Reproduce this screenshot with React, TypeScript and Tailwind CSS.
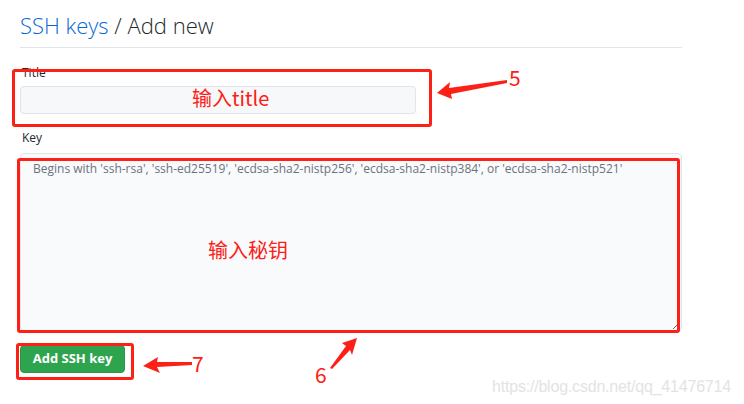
const RED = "#fc2016";

export default function App() {
  return (
    <div className="relative h-[404px] w-[744px] overflow-hidden bg-white font-['Open_Sans','Noto_Sans',sans-serif] text-[#24292e]">
      <div className="flex w-[682px] flex-col pl-5">
        <div className="border-b border-[#e1e4e8] pb-[7px] pt-[10px]">
          <h1 className="text-[22px] font-light leading-[30px]">
            <span className="text-[#0366d6]">SSH keys</span> / Add new
          </h1>
        </div>

        <form className="flex flex-col items-start pt-[17px]">
          <div className="flex flex-col gap-[5px]">
            <label className="pl-[2px] text-[12px] font-medium leading-4">Title</label>
            <input
              type="text"
              className="h-[28px] w-[396px] rounded-[4px] border border-[#e1e4e8] bg-[#f6f8fa] px-2 text-[12px] outline-none"
            />
          </div>

          <div className="mt-4 flex flex-col gap-[7px]">
            <label className="pl-[2px] text-[12px] font-medium leading-4">Key</label>
            <textarea
              className="h-[178px] w-[662px] rounded-[4px] border border-[#e1e4e8] bg-[#f9fafb] px-3 pt-[7px] text-[12px] leading-4 outline-none placeholder:text-[#6a737d]"
              placeholder="Begins with 'ssh-rsa', 'ssh-ed25519', 'ecdsa-sha2-nistp256', 'ecdsa-sha2-nistp384', or 'ecdsa-sha2-nistp521'"
            />
          </div>

          <button
            type="button"
            className="mt-[14px] h-[28px] w-[105px] rounded-[4px] border border-[#28964a] bg-[#2ea44f] text-[13px] font-bold text-white"
          >
            Add SSH key
          </button>
        </form>
      </div>

      {/* red annotations drawn over the screenshot */}
      <div className="pointer-events-none absolute left-[12px] top-[69px] h-[58px] w-[420px] rounded-[3px] border-[3px] border-[#fc2016]" />
      <div className="pointer-events-none absolute left-[17px] top-[158px] h-[175px] w-[663px] rounded-[3px] border-[3px] border-[#fc2016]" />
      <div className="pointer-events-none absolute left-[16px] top-[343px] h-[37px] w-[118px] rounded-[3px] border-[3px] border-[#fc2016]" />

      <div className="absolute left-[192px] top-[86px] font-['Noto_Sans_CJK_SC',sans-serif] text-[20px] leading-[24px] text-[#fc2016]">
        输入title
      </div>
      <div className="absolute left-[208px] top-[238px] font-['Noto_Sans_CJK_SC',sans-serif] text-[20px] leading-[24px] text-[#fc2016]">
        输入秘钥
      </div>

      <svg className="pointer-events-none absolute left-0 top-0" width="744" height="404" viewBox="0 0 744 404">
        <g fill={RED}>
          <polygon points="437,93 450,82 449,88 507,80 507,83 451,94 452,99" />
          <polygon points="143,366 158,357 157,362 192,362 192,365 157,367 160,373" />
          <polygon points="357,338 342,343 346,346 330,368 332,369 350,350 352,355" />
        </g>
        <g fill={RED} fontFamily="'Noto Sans CJK SC', sans-serif" fontSize="21">
          <text x="509" y="86">5</text>
          <text x="192" y="372">7</text>
          <text x="315" y="383">6</text>
        </g>
      </svg>

      <div className="absolute left-[492px] top-[377px] font-['Liberation_Sans',sans-serif] text-[16px] leading-[20px] tracking-[-0.2px] text-[#e3e3e3]">
        https://blog.csdn.net/qq_41476714
      </div>
    </div>
  );
}
